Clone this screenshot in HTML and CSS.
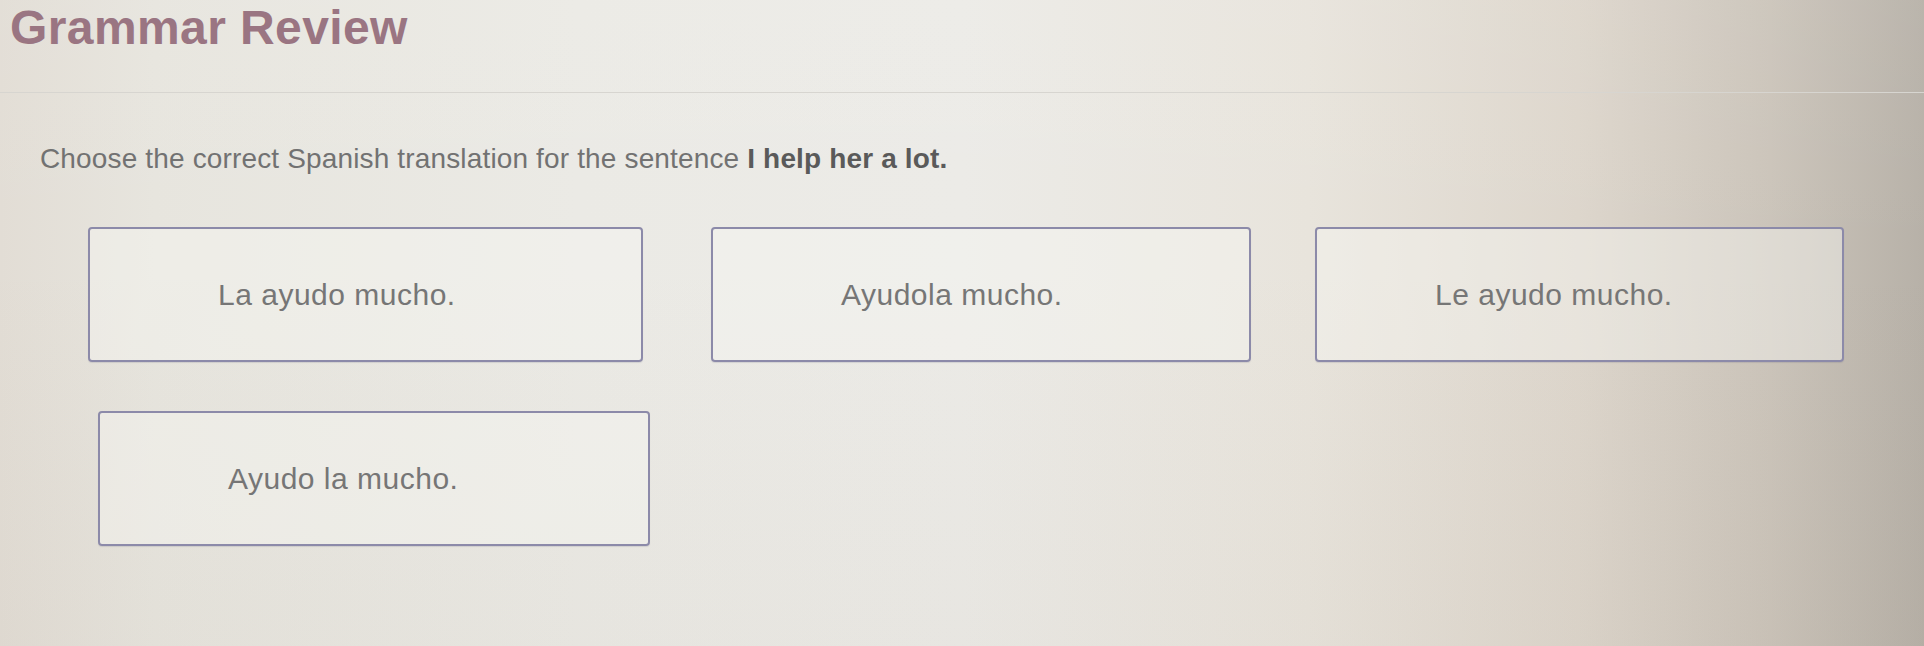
FILE: index.html
```html
<!DOCTYPE html>
<html lang="en">
<head>
<meta charset="utf-8">
<title>Grammar Review</title>
<link rel="stylesheet" href="styles.css">
</head>
<body>
<div class="page">
  <header class="header">
    <h1 class="title">Grammar Review</h1>
  </header>
  <p class="question">Choose the correct Spanish translation for the sentence <strong>I help her a lot.</strong></p>
  <div class="options">
    <div class="option">La ayudo mucho.</div>
    <div class="option">Ayudola mucho.</div>
    <div class="option">Le ayudo mucho.</div>
    <div class="option">Ayudo la mucho.</div>
  </div>
</div>
</body>
</html>
```

FILE: styles.css
```css
html, body {
  margin: 0;
  padding: 0;
  height: 100%;
}

body {
  font-family: "Liberation Sans", Arial, sans-serif;
  background:
    linear-gradient(180deg, rgba(255,255,255,0.05) 0%, rgba(0,0,0,0) 40%, rgba(120,100,80,0.04) 100%),
    linear-gradient(90deg, #e2ddd5 0%, #e7e5de 8%, #ebeae5 30%, #ecebe7 50%, #e8e4dc 68%, #ddd6cc 82%, #cbc4ba 92%, #b7b1a8 100%);
  overflow: hidden;
}

.page {
  width: 1924px;
  height: 646px;
}

.header {
  height: 93px;
  border-bottom: 1px solid #d7d5d0;
  box-sizing: border-box;
  padding: 2px 0 0 10px;
}

.title {
  margin: 0;
  font-size: 48px;
  line-height: 52px;
  font-weight: bold;
  color: #9a7582;
  letter-spacing: 0.4px;
}

.question {
  margin: 0;
  padding: 50px 0 0 40px;
  height: 84px;
  box-sizing: content-box;
  font-size: 28px;
  line-height: 32px;
  color: #727272;
  letter-spacing: 0.15px;
}

.question strong {
  color: #5a5a5a;
}

.options {
  display: grid;
  grid-template-columns: 555px 540px 525px;
  grid-auto-rows: 135px;
  column-gap: 68px;
  row-gap: 49px;
  padding-left: 88px;
}

.option {
  display: flex;
  align-items: center;
  padding-left: 128px;
  border: 2.5px solid #8c8aa9;
  border-radius: 4px;
  background: rgba(246, 246, 242, 0.45);
  font-size: 30px;
  letter-spacing: 0.5px;
  color: #767676;
  box-shadow: 0 1px 1px rgba(80, 80, 110, 0.15);
}

.option:nth-child(3) {
  margin-left: -4px;
  padding-left: 118px;
}

.option:nth-child(4) {
  margin-left: 10px;
  width: 552px;
  box-sizing: border-box;
}
```
